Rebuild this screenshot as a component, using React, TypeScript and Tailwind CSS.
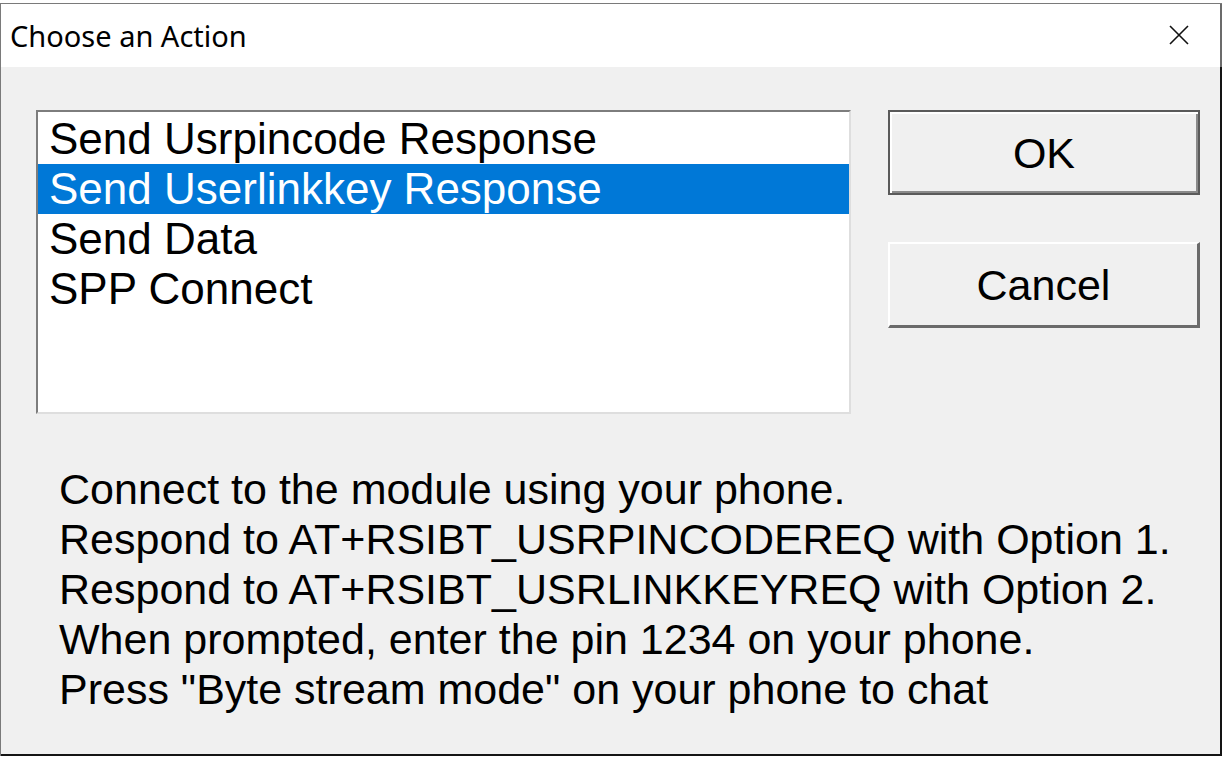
import React, { useState } from "react";

const items = [
  "Send Usrpincode Response",
  "Send Userlinkkey Response",
  "Send Data",
  "SPP Connect",
];

const notes = [
  "Connect to the module using your phone.",
  "Respond to AT+RSIBT_USRPINCODEREQ with Option 1.",
  "Respond to AT+RSIBT_USRLINKKEYREQ with Option 2.",
  "When prompted, enter the pin 1234 on your phone.",
  'Press "Byte stream mode" on your phone to chat',
];

const App: React.FC = () => {
  const [selected, setSelected] = useState(1);

  return (
    <div className="w-[1229px] h-[765px] bg-white pt-[3px]">
      <div className="w-[1222px] h-[753px] flex flex-col border-t border-l border-[#7a7a7a]">
        {/* title bar */}
        <div className="h-[63px] bg-white flex items-center justify-between pl-[9px] pr-[31px] border-r-2 border-[#6b6b6b] font-['Noto_Sans',sans-serif] text-[29px] text-black">
          <span>Choose an Action</span>
          <svg width="20" height="20" viewBox="0 0 20 20" className="-mt-[2px]">
            <path d="M1 1 L19 19 M19 1 L1 19" stroke="#111" strokeWidth="1.6" />
          </svg>
        </div>

        {/* body */}
        <div className="flex-1 bg-[#f0f0f0] border-r-2 border-b-2 border-[#141414] pt-[43px] pl-[35px] font-['Liberation_Sans',sans-serif] text-[43px] leading-[50px] text-black">
          <div className="flex gap-[37px]">
            <div className="w-[815px] h-[304px] bg-white border-2 border-t-[#7d7d7d] border-l-[#7d7d7d] border-r-[#dedede] border-b-[#dedede] pt-[2px] text-[44px]">
              {items.map((item, idx) => (
                <div
                  key={idx}
                  onClick={() => setSelected(idx)}
                  className={`h-[50px] pl-[11px] whitespace-nowrap cursor-default ${
                    selected === idx ? "bg-[#0078d7] text-white" : "text-black"
                  }`}
                >
                  {item}
                </div>
              ))}
            </div>

            <div className="flex flex-col gap-[47px]">
              <button className="w-[312px] h-[85px] bg-[#f0f0f0] border-2 border-[#5a5a5a] shadow-[inset_2px_2px_0_#ffffff,inset_-2px_-2px_0_#8a8a8a] text-[43px]">
                OK
              </button>
              <button className="w-[312px] h-[86px] bg-[#f0f0f0] border-t-2 border-l-2 border-r-[3px] border-b-[3px] border-t-white border-l-white border-r-[#6a6a6a] border-b-[#6a6a6a] text-[43px]">
                Cancel
              </button>
            </div>
          </div>

          <div className="mt-[50px] pl-[23px]">
            {notes.map((line, idx) => (
              <p key={idx} className="whitespace-nowrap">
                {line}
              </p>
            ))}
          </div>
        </div>
      </div>
    </div>
  );
};

export default App;
